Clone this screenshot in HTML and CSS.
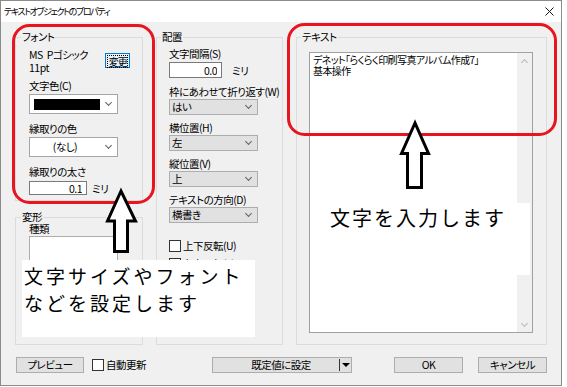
FILE: index.html
```html
<!DOCTYPE html>
<html lang="ja">
<head>
  <meta charset="UTF-8">
  <title>テキストオブジェクトのプロパティ</title>
  <link rel="stylesheet" href="styles.css">
</head>
<body>
<div class="screen">
  <div class="window">
    <div class="titlebar">
      <span class="title">テキストオブジェクトのプロパティ</span>
      <svg class="close" width="9" height="9" viewBox="0 0 9 9">
        <path d="M0.5 0.5 L8.5 8.5 M8.5 0.5 L0.5 8.5" stroke="#111" stroke-width="1" fill="none"/>
      </svg>
    </div>

    <div class="content">
      <div class="columns">
        <div class="col-left">
          <fieldset class="group group-font">
            <legend>フォント</legend>
            <div class="font-row">
              <div class="font-name">
                <div>MS Pゴシック</div>
                <div>11pt</div>
              </div>
              <button class="btn btn-change"><span>変更</span></button>
            </div>
            <div class="label label-first">文字色(C)</div>
            <div class="combo combo-white"><span class="swatch"></span><span class="chev"></span></div>
            <div class="label">縁取りの色</div>
            <div class="combo combo-white"><span class="combo-center">(なし)</span><span class="chev"></span></div>
            <div class="label">縁取りの太さ</div>
            <div class="input-row">
              <input class="edit edit-small" type="text" value="0.1">
              <span class="unit">ミリ</span>
            </div>
          </fieldset>

          <fieldset class="group group-transform">
            <legend>変形</legend>
            <div class="label label-kind">種類</div>
            <div class="listbox"></div>
          </fieldset>
        </div>

        <fieldset class="group group-layout">
          <legend>配置</legend>
          <div class="label">文字間隔(S)</div>
          <div class="input-row">
            <input class="edit edit-spacing" type="text" value="0.0">
            <span class="unit unit-wide">ミリ</span>
          </div>
          <div class="label label-wrap">枠にあわせて折り返す(W)</div>
          <div class="combo"><span>はい</span><span class="chev"></span></div>
          <div class="label">横位置(H)</div>
          <div class="combo"><span>左</span><span class="chev"></span></div>
          <div class="label">縦位置(V)</div>
          <div class="combo"><span>上</span><span class="chev"></span></div>
          <div class="label">テキストの方向(D)</div>
          <div class="combo"><span>横書き</span><span class="chev"></span></div>
          <div class="check-row check-first"><span class="check"></span>上下反転(U)</div>
          <div class="check-row"><span class="check"></span>左右反転(L)</div>
        </fieldset>

        <fieldset class="group group-text">
          <legend>テキスト</legend>
          <div class="textbox">
            <div class="textbox-text">
              <div>デネット「らくらく印刷写真アルバム作成7」</div>
              <div>基本操作</div>
            </div>
            <div class="scrollbar">
              <span class="arrow-up"></span>
              <span class="arrow-down"></span>
            </div>
          </div>
        </fieldset>
      </div>

      <div class="footer">
        <div class="footer-left">
          <button class="btn btn-preview">プレビュー</button>
          <span class="check-row check-auto"><span class="check"></span>自動更新</span>
        </div>
        <button class="btn btn-split">
          <span class="split-main">既定値に設定</span>
          <span class="split-arrow"></span>
        </button>
        <button class="btn btn-ok">OK</button>
        <button class="btn btn-cancel">キャンセル</button>
      </div>
    </div>
  </div>

  <!-- 説明用の囲みと矢印 -->
  <svg class="marks" width="567" height="387" viewBox="0 0 567 387">
    <rect x="13.5" y="25.5" width="140" height="177" rx="16" fill="none" stroke="#e8141e" stroke-width="3"/>
    <rect x="288.5" y="24.5" width="267" height="110" rx="16" fill="none" stroke="#e8141e" stroke-width="3"/>
    <polygon points="121,191 107.5,221 114.5,221 114.5,251.5 127.5,251.5 127.5,221 135.5,221"
             fill="#fff" stroke="#000" stroke-width="3" stroke-miterlimit="10"/>
    <polygon points="415,123 401.5,153.5 407.5,153.5 407.5,187.5 421.5,187.5 421.5,153.5 428.5,153.5"
             fill="#fff" stroke="#000" stroke-width="3" stroke-miterlimit="10"/>
  </svg>

  <div class="note note-font">文字サイズやフォント<br>などを設定します</div>
  <div class="note note-text">文字を入力します</div>
</div>
</body>
</html>
```

FILE: styles.css
```css
* {
  box-sizing: border-box;
}

body {
  margin: 0;
  background-color: #fff;
  font-family: "Noto Sans CJK JP", sans-serif;
  font-size: 10.5px;
  color: #000;
  font-feature-settings: "palt";
  letter-spacing: -0.5px;
}

.screen {
  position: relative;
  width: 567px;
  height: 387px;
  overflow: hidden;
}

.window {
  width: 562px;
  height: 386px;
  border: 1px solid #8c8c8c;
  background-color: #f0f0f0;
}

.titlebar {
  height: 21px;
  background-color: #fff;
  display: flex;
  align-items: center;
  justify-content: space-between;
  padding: 0 7px 0 3px;
}

.title {
  font-size: 9px;
  letter-spacing: -1.4px;
  line-height: 21px;
}

.content {
  padding: 8px 0 0 14px;
}

.columns {
  display: flex;
  height: 315px;
}

.col-left {
  width: 128px;
  display: flex;
  flex-direction: column;
}

/* グループボックス */
.group {
  margin: 0;
  border: 1px solid #dcdcdc;
  min-width: 0;
}

.group legend {
  padding: 0 1px;
  margin-left: -8px;
  line-height: 14px;
}

.group-font {
  height: 171px;
  padding: 4px 12px 0 13px;
}

.group-transform {
  flex: 1;
  margin-top: 9px;
  padding: 0 12px 0 13px;
}

.group-layout {
  width: 127px;
  margin-left: 13px;
  padding: 3px 12px 0 12px;
}

.group-text {
  width: 251px;
  margin-left: 13px;
  padding: 8px 13px 0 12px;
}

.label {
  line-height: 14px;
  margin-top: 8px;
  white-space: nowrap;
}

.group-layout .label {
  margin-top: 6px;
}

.group-layout .label:first-of-type {
  margin-top: 0;
}

.group-layout .label-wrap {
  margin-top: 7px;
}

.label-first {
  margin-top: 5px;
}

.label-kind {
  margin-top: -2px;
}

.font-row {
  display: flex;
  height: 26px;
}

.font-name {
  width: 78px;
  line-height: 13px;
  white-space: nowrap;
  word-spacing: 2px;
}

/* ボタン */
.btn {
  font-family: inherit;
  font-size: 10.5px;
  letter-spacing: inherit;
  font-feature-settings: inherit;
  color: #000;
  background-color: #e1e1e1;
  border: 1px solid #adadad;
  border-radius: 0;
  padding: 0;
  height: 16px;
  line-height: 14px;
  white-space: nowrap;
}

.btn-change {
  width: 25px;
  height: 15px;
  margin-top: 5px;
  border-color: #0078d7;
  background-color: #e5f1fb;
  line-height: 11px;
  padding: 1px;
  font-size: 10px;
}

.btn-change span {
  display: block;
  border: 1px dotted #000;
  letter-spacing: -1px;
}

/* コンボボックス */
.combo {
  margin-top: 1px;
  width: 89px;
  height: 16px;
  background-color: #e1e1e1;
  border: 1px solid #adadad;
  display: flex;
  align-items: center;
  justify-content: space-between;
  padding: 0 6px 0 2px;
  line-height: 14px;
}

.combo-white {
  height: 20px;
  background-color: #fff;
  border-color: #a5a5a5;
  padding-left: 4px;
}

.group-layout .combo {
  margin-top: 0;
}

.chev {
  width: 5px;
  height: 5px;
  border-right: 1px solid #606060;
  border-bottom: 1px solid #606060;
  transform: rotate(45deg);
  margin-top: -3px;
}

.swatch {
  width: 66px;
  height: 11px;
  background-color: #000;
}

.combo-center {
  flex: 1;
  text-align: center;
  margin-right: 10px;
}

/* エディット */
.input-row {
  display: flex;
  align-items: center;
  margin-top: 1px;
}

.edit {
  font-family: inherit;
  font-size: 10.5px;
  letter-spacing: inherit;
  color: #000;
  background-color: #fff;
  border: 1px solid #7a7a7a;
  border-radius: 0;
  text-align: right;
  padding: 0 4px 0 0;
  margin: 0;
  outline: none;
}

.edit-small {
  width: 58px;
  height: 14px;
  line-height: 12px;
}

.edit-spacing {
  width: 53px;
  height: 16px;
  line-height: 14px;
}

.unit {
  margin-left: 5px;
  margin-top: 1px;
}

.unit-wide {
  margin-left: 10px;
}

.listbox {
  width: 89px;
  height: 90px;
  background-color: #fff;
  border: 1px solid #adadad;
}

/* チェックボックス */
.check-row {
  display: flex;
  align-items: center;
  height: 13px;
  line-height: 12px;
  margin-top: 5px;
  white-space: nowrap;
}

.check-first {
  margin-top: 16px;
}

.check {
  width: 12px;
  height: 12px;
  border: 1px solid #333;
  background-color: #fff;
  margin-right: 2px;
  flex-shrink: 0;
}

/* テキスト入力欄 */
.textbox {
  width: 224px;
  height: 281px;
  background-color: #fff;
  border: 1px solid #a0a0a0;
  display: flex;
}

.textbox-text {
  flex: 1;
  padding: 1px 0 0 3px;
  line-height: 11px;
  font-size: 10px;
  letter-spacing: -0.6px;
  white-space: nowrap;
}

.scrollbar {
  width: 15px;
  background-color: #f0f0f0;
  display: flex;
  flex-direction: column;
  justify-content: space-between;
  align-items: center;
  padding: 7px 0 6px;
}

.arrow-up,
.arrow-down {
  width: 5px;
  height: 5px;
  border-left: 1px solid #b8b8b8;
  border-top: 1px solid #b8b8b8;
  transform: rotate(45deg);
}

.arrow-down {
  transform: rotate(225deg);
}

/* 下部ボタン */
.footer {
  display: flex;
  margin-top: 12px;
  height: 16px;
}

.footer-left {
  width: 197px;
  display: flex;
  align-items: center;
}

.btn-preview {
  width: 68px;
  margin-left: 1px;
}

.check-auto {
  margin: 0 0 0 8px;
}

.btn-split {
  width: 140px;
  display: flex;
  align-items: center;
}

.split-main {
  flex: 1;
  text-align: center;
  padding-left: 10px;
}

.split-arrow {
  width: 12px;
  height: 12px;
  border-left: 1px solid #333;
  position: relative;
}

.split-arrow::after {
  content: "";
  position: absolute;
  left: 2px;
  top: 4px;
  border-left: 4px solid transparent;
  border-right: 4px solid transparent;
  border-top: 4px solid #000;
}

.btn-ok {
  width: 69px;
  margin-left: 42px;
}

.btn-cancel {
  width: 69px;
  margin-left: 15px;
}

/* 説明の注記 */
.marks {
  position: absolute;
  left: 0;
  top: 0;
  pointer-events: none;
}

.note {
  position: absolute;
  background-color: #fff;
  font-feature-settings: normal;
  white-space: nowrap;
}

.note-font {
  left: 22px;
  top: 260px;
  width: 233px;
  height: 77px;
  padding: 2px 0 0 2px;
  font-size: 19px;
  letter-spacing: 3px;
  line-height: 27px;
}

.note-text {
  left: 316px;
  top: 203px;
  width: 214px;
  height: 72px;
  padding: 1px 0 0 14px;
  font-size: 20px;
  letter-spacing: 2px;
  line-height: 28px;
}
```
